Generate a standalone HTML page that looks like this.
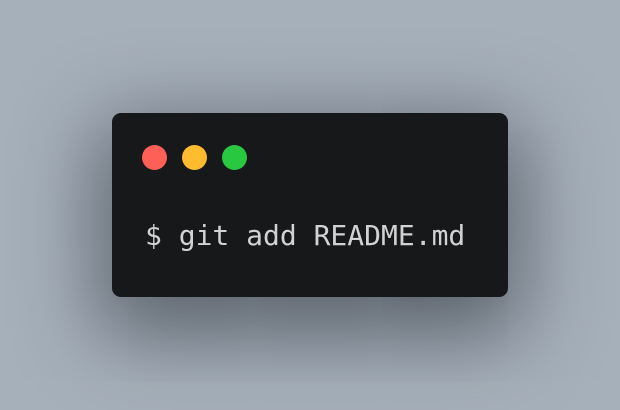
<!DOCTYPE html>
<html><head><style>
html,body{margin:0;padding:0;}
body{width:620px;height:410px;background:#a6b0ba;position:relative;overflow:hidden;}
.card{position:absolute;left:112px;top:113px;width:396px;height:184px;background:#17181a;border-radius:9px;box-shadow:0 24px 80px 14px rgba(40,45,55,0.6);}
.dot{position:absolute;top:32px;width:25px;height:25px;border-radius:50%;}
.t{position:absolute;left:33px;top:105px;font-family:"DejaVu Sans Mono","Liberation Mono",monospace;font-size:28px;color:#d2d2d2;white-space:pre;line-height:36px;}
</style></head><body>
<div class="card">
<div class="dot" style="left:29.5px;background:#fe5f57"></div>
<div class="dot" style="left:69.5px;background:#febc2e"></div>
<div class="dot" style="left:109.5px;background:#28c840"></div>
<div class="t">$ git add README.md</div>
</div>
</body></html>
